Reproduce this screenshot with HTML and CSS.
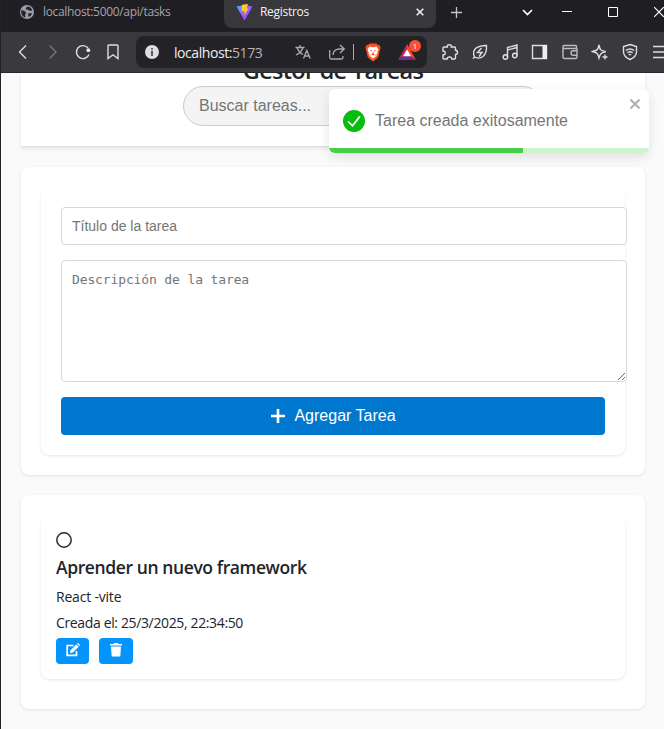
FILE: index.html
```html
<!DOCTYPE html>
<html lang="es">
<head>
<meta charset="utf-8">
<title>Registros</title>
<link rel="stylesheet" href="styles.css">
</head>
<body>
<div class="window">
  <div class="tabs">
    <div class="tab tab-idle">
      <svg width="14" height="14" viewBox="0 0 14 14"><circle cx="7" cy="7" r="7" fill="#9aa0a6"/><path d="M1.300 5 4.500 6 6.500 8 5 9.500 5.500 12.500C2.500 12 .7 9 1.300 5ZM7 1.500 10 2 12 4.500 11.500 6 9 5.500 7.500 4.500 5.500 4.500ZM8 8.500 12 8 11 10.500 8.500 12Z" fill="#25242a"/></svg>
      <span class="tab-name idle-name">localhost:5000/api/tasks</span>
    </div>
    <div class="tab tab-active">
      <svg width="17" height="17" viewBox="0 0 17 17"><defs><linearGradient id="v" x1="0" y1="0" x2="1" y2="1"><stop offset="0" stop-color="#41b8ff"/><stop offset=".6" stop-color="#a74cff"/></linearGradient></defs><path d="M.5 2.500 8.500 1 16.500 2.500 8.500 16.500Z" fill="url(#v)"/><path d="M6 .8 12 0 10.500 4.500 12.500 4.500 8.300 11.500 8.500 7 5.500 7.500Z" fill="#ffc928"/></svg>
      <span class="tab-name active-name">Registros</span>
      <svg class="tab-close" width="8" height="8" viewBox="0 0 8 8"><path d="M.7.7 7.300 7.300M7.300.7.7 7.300" stroke="#eee" stroke-width="1.600"/></svg>
    </div>
    <svg class="tab-new" width="11" height="11" viewBox="0 0 11 11"><path d="M5.500 0V11M0 5.500H11" stroke="#c4c4c8" stroke-width="1.300"/></svg>
    <svg class="tab-list" width="11" height="7" viewBox="0 0 11 7"><path d="M1 1 5.500 5.500 10 1" fill="none" stroke="#fff" stroke-width="1.700"/></svg>
    <svg class="win-min" width="10" height="10" viewBox="0 0 10 10"><path d="M0 4.500H10" stroke="#fff"/></svg>
    <svg class="win-max" width="10" height="10" viewBox="0 0 10 10"><path d="M.5.5H9.500V9.500H.5Z" fill="none" stroke="#fff"/></svg>
    <svg class="win-close" width="10" height="10" viewBox="0 0 10 10"><path d="M0 0 10 10M10 0 0 10" stroke="#fff" stroke-width="1.200"/></svg>
  </div>
  <div class="toolbar">
    <span class="tool"><svg width="18" height="18" viewBox="0 0 18 18"><path d="M12 2.500 5.500 9 12 15.500"/></svg></span>
    <span class="tool dim"><svg width="18" height="18" viewBox="0 0 18 18"><path d="M5.500 2.500 12 9 5.500 15.500"/></svg></span>
    <span class="tool"><svg width="18" height="18" viewBox="0 0 18 18"><path d="M14 5A6.500 6.500 0 1 0 15 11.500"/><circle cx="14.300" cy="7.200" r="1.900" class="solid"/></svg></span>
    <span class="tool"><svg width="18" height="18" viewBox="0 0 18 18"><path d="M4 3Q4 2 5 2H13Q14 2 14 3V15.500L9 11.800 4 15.500Z"/></svg></span>
    <div class="address">
      <svg width="14" height="14" viewBox="0 0 14 14"><circle cx="7" cy="7" r="7" fill="#dddde2"/><path d="M6.200 3H7.800V4.600H6.200ZM6.200 5.800H7.800V11H6.200Z" fill="#39383e"/></svg>
      <span class="url"><span>localhost:</span><span class="port">5173</span></span>
      <svg class="line translate" width="16" height="16" viewBox="0 0 16 16"><path d="M.5 3.500H9.500M5 1V3.500M2 3.500Q3.500 8 8 10.500M8 3.500Q6.500 8.500 1 11M8.500 14.500 11.800 6.500 15.200 14.500M9.700 12H14"/></svg>
      <svg class="line share" width="16" height="16" viewBox="0 0 16 16"><path d="M.7 6V13.500Q.7 15 2.200 15H12.500Q14 15 14 13.500V12M4 11Q4.500 5 10.500 5H15M11 1 15.200 5 11 9"/></svg>
      <span class="divider"></span>
      <svg class="brave" width="16" height="19" viewBox="0 0 16 19"><path d="M4.500.5H11.500L13 2 14.500 2 15.700 5 15 6.500 13.500 13.500 12 15.500 8 18.500 4 15.500 2.500 13.500 1 6.500.3 5 1.500 2 3 2Z" fill="#fb4f1e"/><path d="M4.500 3.500 8 4.200 11.500 3.500 13.500 6.500 12.500 9 12 12.500 8 15.500 4 12.500 3.500 9 2.500 6.500Z" fill="#fff"/><path d="M4.800 6.800 7 7.300 6.500 8.500ZM11.200 6.800 9 7.300 9.500 8.500ZM8 8 8.600 10.500 10 11.200 8 12.500 6 11.200 7.400 10.500ZM4 10.500 6 12.500 4.700 12.700ZM12 10.500 10 12.500 11.300 12.700Z" fill="#fb4f1e"/></svg>
      <span class="rewards"><svg width="18" height="16" viewBox="0 0 18 16"><path d="M9 0 0 16 9 10Z" fill="#b7265b"/><path d="M9 0 18 16 9 10Z" fill="#ff4a24"/><path d="M0 16H18L9 9.500Z" fill="#6c2f91"/><path d="M9 5.500 13 12.300H5Z" fill="#fff"/></svg><span class="badge">1</span></span>
    </div>
    <span class="tool"><svg width="18" height="18" viewBox="0 0 18 18"><path d="M3 4H6.300Q5.800 1.700 8.300 1.700T10.300 4H13.700Q14.500 4 14.500 4.800V7.300Q16.500 7.500 16.500 9.500T14.500 11.500V15Q14.500 16 13.500 16H10.800Q10.800 14 8.500 14T6.200 16H3Q2 16 2 15V12Q4.200 12 4.200 10T2 8V5Q2 4 3 4Z"/></svg></span>
    <span class="tool"><svg width="18" height="18" viewBox="0 0 18 18"><path d="M2 15.800 3.500 14Q1.200 9 4.500 5.500 7.500 2.800 15.500 2.500 16 10 12 13.500 8 16.500 4 14"/><path d="M10.500 5 6.500 9.500H11L8 13.500"/></svg></span>
    <span class="tool"><svg width="18" height="18" viewBox="0 0 18 18"><path d="M6.500 14V4.500L16 2V12.500M6.500 7 16 4.500"/><circle cx="4.400" cy="14" r="2.200"/><circle cx="13.800" cy="12.500" r="2.200"/></svg></span>
    <span class="tool"><svg width="18" height="18" viewBox="0 0 18 18"><path d="M1.500 2.500H15.500V15.500H1.500Z"/><path d="M11.500 2H16V16H11.500Z" class="solid"/></svg></span>
    <span class="tool soft"><svg width="18" height="18" viewBox="0 0 18 18"><path d="M15.500 6V3.500Q15.500 2.500 14.500 2.500H3Q2 2.500 2 3.500V14Q2 15.500 3.500 15.500H14.500Q16 15.500 16 14V6Q16 5.500 15 5.500H2M16 7.700H12.200Q10 7.700 10 10T12.200 12.300H16"/></svg></span>
    <span class="tool"><svg width="18" height="18" viewBox="0 0 18 18"><path d="M8 2Q8.800 6.300 10 7T14.700 8.700Q10.700 9.500 9.800 10.800T8 15Q7.200 11.500 6.200 10.500T1.500 8.500Q5.500 7.500 6.400 6.500T8 2ZM14 11.500V16.500M11.500 14H16.500"/></svg></span>
    <span class="tool"><svg width="18" height="18" viewBox="0 0 18 18"><path d="M9 1.500 15.500 3.500V9Q15.500 13.500 9 16.500 2.500 13.500 2.500 9V3.500ZM4.800 7.500Q9 4.500 13.200 7.500M6.300 9.700Q9 7.700 11.700 9.700M7.800 11.800Q9 11 10.200 11.800"/></svg></span>
    <span class="tool"><svg width="18" height="18" viewBox="0 0 18 18"><path d="M2 3.500H16M2 9H16M2 14.500H16"/></svg></span>
  </div>
  <main class="page">
    <header class="top">
      <h1>Gestor de Tareas</h1>
      <input class="search" placeholder="Buscar tareas...">
    </header>
    <section class="card">
      <div class="panel form">
        <input class="field" placeholder="Título de la tarea">
        <textarea class="field area" placeholder="Descripción de la tarea"></textarea>
        <button class="add"><svg width="14" height="14" viewBox="0 0 14 14"><path d="M7 0V14M0 7H14" stroke="#fff" stroke-width="2.600"/></svg>Agregar Tarea</button>
      </div>
    </section>
    <section class="card">
      <div class="panel task">
        <svg class="check" width="16" height="16" viewBox="0 0 16 16"><circle cx="8" cy="8" r="7.200" fill="none" stroke="#26292d" stroke-width="1.500"/></svg>
        <h3>Aprender un nuevo framework</h3>
        <p class="desc">React -vite</p>
        <p class="date">Creada el: 25/3/2025, 22:34:50</p>
        <div class="actions">
          <button class="edit"><svg width="14" height="14" viewBox="0 0 14 14"><path d="M7.500 2.500H1.200V12.300H10.500V8" fill="none" stroke="#fff" stroke-width="1.700"/><path d="M4 10 4.500 7.200 10.300 1.400 12.700 3.700 6.900 9.500ZM11 .8 12 0 14 2 13.300 3Z" fill="#fff"/></svg></button>
          <button class="remove"><svg width="12" height="14" viewBox="0 0 12 14"><path d="M0 1H3.500L4.200 0H7.800L8.500 1H12V2.500H0ZM1 3.500H11L10.300 13.500H1.700Z" fill="#fff"/></svg></button>
        </div>
      </div>
    </section>
    <div class="toast">
      <svg class="ok" width="22" height="22" viewBox="0 0 22 22"><circle cx="11" cy="11" r="11" fill="#07bc0c"/><path d="M5 11.500 9.500 15.700 17 6.300" fill="none" stroke="#fff" stroke-width="1.700"/></svg>
      <span class="message">Tarea creada exitosamente</span>
      <svg class="dismiss" width="12" height="12" viewBox="0 0 12 12"><path d="M1.500 1.500 10.500 10.500M10.500 1.500 1.500 10.500" stroke="#b1b1b1" stroke-width="2.200"/></svg>
      <div class="progress"><div class="bar"></div></div>
    </div>
  </main>
</div>
</body>
</html>
```
FILE: styles.css
```css
* { box-sizing: border-box; }
body { margin: 0; overflow: hidden; background: #fafafa; font-family: "Open Sans", "Noto Sans", sans-serif; }
svg { display: block; flex: none; }
.window { width: 664px; height: 729px; display: flex; flex-direction: column; overflow: hidden; border-left: 1px solid #222126; }
.tabs { height: 32px; flex: none; display: flex; background: #1f1e23; overflow: hidden; }
.tab { display: flex; align-items: center; height: 28px; flex: none; }
.tab-idle { width: 223px; padding: 0 0 4px 19px; gap: 9px; }
.tab-active { width: 212px; padding: 0 12px 4px 12px; background: #38373c; border-radius: 0 0 8px 8px; }
.tab-name { font-size: 12px; line-height: 16px; white-space: nowrap; }
.idle-name { color: #a5a5a8; letter-spacing: -0.33px; }
.active-name { color: #f3f3f4; margin-left: 7px; letter-spacing: -0.3px; }
.tab-close { margin-left: auto; }
.tab-new { margin: 7px 0 0 15px; }
.tab-list { margin: 9px 0 0 60px; }
.win-min { margin: 7px 0 0 29px; }
.win-max { margin: 7px 0 0 36px; }
.win-close { margin: 7px 0 0 36px; }
.toolbar { height: 41px; flex: none; display: flex; align-items: center; padding-left: 7px; background: #3a393e; border-bottom: 1px solid #28272b; overflow: hidden; }
.tool { width: 30px; flex: none; display: flex; justify-content: center; }
.tool path, .tool circle { fill: none; stroke: #dedee2; stroke-width: 1.4; }
.tool .solid { fill: #eeeef1; stroke: none; }
.dim path { stroke: #77767c; }
.soft path { stroke: #bbbbc0; }
.address { width: 291px; height: 32px; margin: 0 8px 0 8px; padding: 0 11px 0 9px; flex: none; display: flex; align-items: center; background: #232227; border-radius: 8px; }
.url { display: flex; width: 121px; flex: none; margin-left: 15px; font-size: 14px; line-height: 19px; color: #eeeef0; letter-spacing: -0.43px; white-space: nowrap; }
.port { color: #b5b5b9; }
.line path { fill: none; stroke: #aaaab0; stroke-width: 1.3; }
.share { margin-left: 18px; }
.divider { width: 1px; height: 16px; margin-left: 8px; background: #aaaab0; }
.brave { margin-left: 11px; }
.rewards { position: relative; margin-left: 17px; }
.badge { position: absolute; left: 11px; top: -4px; width: 12px; height: 12px; border-radius: 6px; background: #ff5131; color: #fff; font-size: 8px; line-height: 12px; text-align: center; }
.page { position: relative; flex: 1; display: flex; flex-direction: column; gap: 20px; padding: 0 19px 0 20px; background: #fafafa; overflow: hidden; }
.top { height: 74px; flex: none; display: flex; flex-direction: column; align-items: center; background: #fff; border-bottom: 1px solid #dfe0e1; box-shadow: 0 2px 4px rgba(0, 0, 0, .08); }
h1 { margin: -20px 0 0; height: 33px; font-size: 23.5px; line-height: 34px; font-weight: 600; color: #212529; letter-spacing: -0.72px; flex: none; }
.search { width: 360px; height: 40px; margin-left: 60px; padding: 0 15px; border: 1px solid #ccc; border-radius: 20px; background: #f4f4f4; font: 16px "Liberation Sans", sans-serif; flex: none; }
::placeholder { color: #757575; opacity: 1; }
.card { flex: none; padding: 20px; background: #fff; border-radius: 8px; box-shadow: 0 1px 3px rgba(0, 0, 0, .1); }
.card + .card { height: 214px; }
.panel { border-radius: 8px; background: #fff; box-shadow: 0 1px 3px rgba(0, 0, 0, .1); }
.form { height: 268px; padding: 20px; display: flex; flex-direction: column; gap: 15px; }
.field { display: block; width: 566px; height: 38px; flex: none; padding: 10px; border: 1px solid #d8d8d8; border-radius: 4px; background: #fff; font: 14px "Liberation Sans", sans-serif; }
.area { height: 122px; padding-top: 11px; font: 13px/16px "DejaVu Sans Mono", monospace; letter-spacing: -0.13px; }
.add { height: 38px; display: flex; align-items: center; justify-content: center; gap: 9px; padding: 0 0 0 1px; border: 0; border-radius: 4px; background: #0078d0; color: #fff; font: 16px "Liberation Sans", sans-serif; }
.task { height: 164px; padding: 17px 15px 0; color: #212529; }
h3 { margin: 7px 0 0; height: 26px; font-size: 17.5px; line-height: 25px; font-weight: 600; letter-spacing: -0.4px; }
.task p { margin: 0; height: 26px; font-size: 14px; line-height: 26px; letter-spacing: -0.36px; }
.task .desc { margin-top: 3px; letter-spacing: -0.2px; }
.actions { display: flex; gap: 10px; margin-top: 2px; }
.actions button { height: 26px; padding: 5px 0 0; display: flex; justify-content: center; align-items: flex-start; border: 0; border-radius: 4px; background: #0494fb; }
.edit { width: 33px; }
.remove { width: 34px; }
.toast { position: absolute; left: 328px; top: 16px; width: 320px; height: 64px; padding: 0 8px 0 14px; display: flex; align-items: center; border-radius: 6px; background: #fff; box-shadow: 0 4px 12px rgba(0, 0, 0, .1); overflow: hidden; }
.message { margin-left: 10px; font: 16px "Liberation Sans", sans-serif; color: #757575; }
.dismiss { margin: 0 0 35px auto; }
.progress { position: absolute; left: 0; right: 0; bottom: 0; height: 5px; background: #cdf2ce; }
.bar { width: 194px; height: 5px; background: #46ce49; }
```
